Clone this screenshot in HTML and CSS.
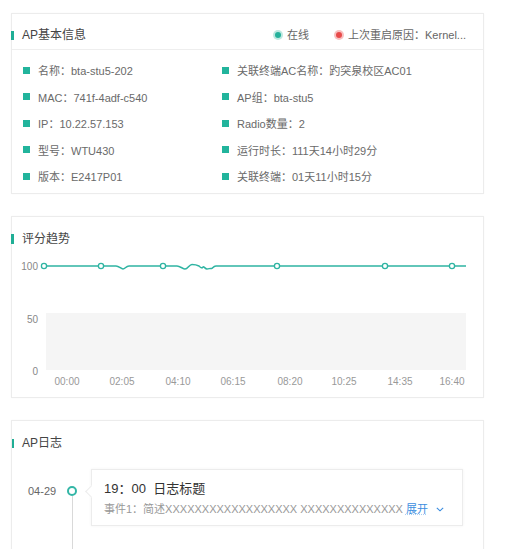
FILE: index.html
```html
<!DOCTYPE html>
<html lang="zh-CN">
<head>
<meta charset="utf-8">
<title>AP详情</title>
<link rel="stylesheet" href="styles.css">
</head>
<body>
<div class="page">
  <section class="card card-info">
    <div class="card-head divided">
      <div class="title"><span class="bar"></span>AP基本信息</div>
      <div class="status">
        <span class="stat"><span class="dot dot-green"></span>在线</span>
        <span class="stat"><span class="dot dot-red"></span>上次重启原因：Kernel...</span>
      </div>
    </div>
    <ul class="info-grid">
      <li><span class="sq"></span>名称：bta-stu5-202</li>
      <li><span class="sq"></span>关联终端AC名称：趵突泉校区AC01</li>
      <li><span class="sq"></span>MAC：741f-4adf-c540</li>
      <li><span class="sq"></span>AP组：bta-stu5</li>
      <li><span class="sq"></span>IP：10.22.57.153</li>
      <li><span class="sq"></span>Radio数量：2</li>
      <li><span class="sq"></span>型号：WTU430</li>
      <li><span class="sq"></span>运行时长：111天14小时29分</li>
      <li><span class="sq"></span>版本：E2417P01</li>
      <li><span class="sq"></span>关联终端：01天11小时15分</li>
    </ul>
  </section>

  <section class="card card-chart">
    <div class="card-head plain">
      <div class="title"><span class="bar tall"></span>评分趋势</div>
    </div>
    <svg class="chart" width="471" height="145" viewBox="0 0 471 145">
      <rect x="34" y="61" width="420" height="57" fill="#f5f5f5"/>
      <g class="ylab">
        <text x="26" y="18" text-anchor="end">100</text>
        <text x="26" y="71" text-anchor="end">50</text>
        <text x="26" y="123" text-anchor="end">0</text>
      </g>
      <path d="M32 14 L104 14 C107 14 109 17 111 17 C113 17 114 14 117 14 L165 14 C168 14 171 17 173 17 C176 17 177 12.5 180 12.5 C183 12.5 185 13 187 14 C189 16 190 16.5 191 15 C192 14 193 17 195 17 C197 17 198 16 199.5 16.5 C200.5 17 201 14 204 14 L454 14" fill="none" stroke="#2fb4a2" stroke-width="1.5"/>
      <g class="pts" fill="#fff" stroke="#2fb4a2" stroke-width="1.3">
        <circle cx="32" cy="14" r="2.6"/>
        <circle cx="89" cy="14" r="2.6"/>
        <circle cx="151" cy="14" r="2.6"/>
        <circle cx="265" cy="14" r="2.6"/>
        <circle cx="373" cy="14" r="2.6"/>
        <circle cx="440" cy="14" r="2.6"/>
      </g>
      <g class="xlab" text-anchor="middle">
        <text x="55" y="133">00:00</text>
        <text x="110" y="133">02:05</text>
        <text x="166" y="133">04:10</text>
        <text x="221" y="133">06:15</text>
        <text x="278" y="133">08:20</text>
        <text x="332" y="133">10:25</text>
        <text x="388" y="133">14:35</text>
        <text x="440" y="133">16:40</text>
      </g>
    </svg>
  </section>

  <section class="card card-log">
    <div class="card-head plain log-head">
      <div class="title"><span class="bar"></span>AP日志</div>
    </div>
    <div class="tl-row">
      <div class="tl-date">04-29</div>
      <div class="tl-axis"><span class="tl-dot"></span><span class="tl-line"></span></div>
      <div class="log-box">
        <div class="log-title">19：00&nbsp; 日志标题</div>
        <div class="log-desc">事件1：简述XXXXXXXXXXXXXXXXXX XXXXXXXXXXXXXX <a class="expand">展开</a><svg class="chev" width="8" height="5" viewBox="0 0 8 5"><path d="M0.8 0.8 L4 3.8 L7.2 0.8" fill="none" stroke="#3d8ee0" stroke-width="1.1"/></svg></div>
      </div>
    </div>
  </section>
</div>
</body>
</html>
```

FILE: styles.css
```css
* { box-sizing: border-box; }
html, body { margin: 0; padding: 0; background: #fff; }
body {
  font-family: "Liberation Sans", "Noto Sans CJK SC", sans-serif;
  color: #666;
  font-size: 11px;
}
.page {
  display: flex;
  flex-direction: column;
  gap: 22px;
  padding: 13px 0 0 11px;
  width: 484px;
}
.card {
  border: 1px solid #ececec;
  background: #fff;
  box-shadow: 0 0 2px rgba(0,0,0,0.03);
}
.card-info { height: 181px; }
.card-chart { height: 182px; }
.card-log { height: 132px; overflow: hidden; }

.card-head {
  display: flex;
  align-items: center;
  justify-content: space-between;
  padding: 14px 17px 7px 0;
}
.card-head.divided { border-bottom: 1px solid #eeeeee; height: 36px; }
.card-head.plain { height: 35px; padding-top: 15px; padding-bottom: 6px; }
.log-head { height: 48px !important; padding-bottom: 19px !important; }

.title {
  display: flex;
  align-items: center;
  font-size: 12px;
  line-height: 14px;
  color: #444;
}
.bar {
  width: 3px;
  height: 9px;
  background: #1fae95;
  margin-left: -1px;
  margin-right: 8px;
}
.bar.tall { height: 10px; }

.status { display: flex; align-items: center; gap: 25px; }
.stat { display: flex; align-items: center; gap: 5px; font-size: 11px; color: #666; line-height: 14px; }
.dot {
  width: 6px; height: 6px; border-radius: 50%;
  margin: 0 1.5px;
}
.dot-green { background: #25b19b; box-shadow: 0 0 0 2px #bde8e0; }
.dot-red { background: #e84a4a; box-shadow: 0 0 0 2px #f8c0c0; }

.info-grid {
  list-style: none;
  margin: 0;
  padding: 7px 0 0 11px;
  display: grid;
  grid-template-columns: 199px 1fr;
  grid-auto-rows: 26.5px;
}
.info-grid li {
  display: flex;
  align-items: center;
  gap: 8px;
  font-size: 11px;
  color: #6a6a6a;
  white-space: nowrap;
}
.sq { width: 7px; height: 7px; background: #22b49c; flex: none; }

.chart { display: block; margin-left: 0; }
.ylab text { font-size: 10px; fill: #888; font-family: "Liberation Sans", sans-serif; }
.xlab text { font-size: 10px; fill: #999; font-family: "Liberation Sans", sans-serif; }

.tl-row { display: flex; align-items: flex-start; padding-left: 16px; }
.tl-date {
  width: 38px;
  margin-top: 15px;
  font-size: 11px;
  line-height: 14px;
  color: #666;
}
.tl-axis { display: flex; flex-direction: column; align-items: center; width: 12px; padding-top: 17px; }
.tl-dot { width: 10px; height: 10px; border-radius: 50%; border: 2px solid #33b6a6; background: #fff; }
.tl-line { width: 1px; height: 60px; background: #d9d9d9; }
.log-box {
  position: relative;
  margin-left: 13px;
  width: 372px;
  border: 1px solid #ececec;
  box-shadow: 0 0 3px rgba(0,0,0,0.05);
  padding: 10px 12px 9px 12px;
}
.log-box::before {
  content: "";
  position: absolute;
  left: -5px;
  top: 17px;
  width: 8px;
  height: 8px;
  background: #fff;
  border-left: 1px solid #ececec;
  border-bottom: 1px solid #ececec;
  transform: rotate(45deg);
}
.log-title { font-size: 13px; line-height: 18px; color: #333; }
.log-desc {
  margin-top: 4px;
  font-size: 11px;
  line-height: 14px;
  color: #999;
  white-space: nowrap;
  display: flex;
  align-items: center;
}
.log-desc .expand { color: #3d8ee0; margin-left: 3px; text-decoration: underline dotted #a9cdf2; }
.chev { margin-left: 8px; }
```
